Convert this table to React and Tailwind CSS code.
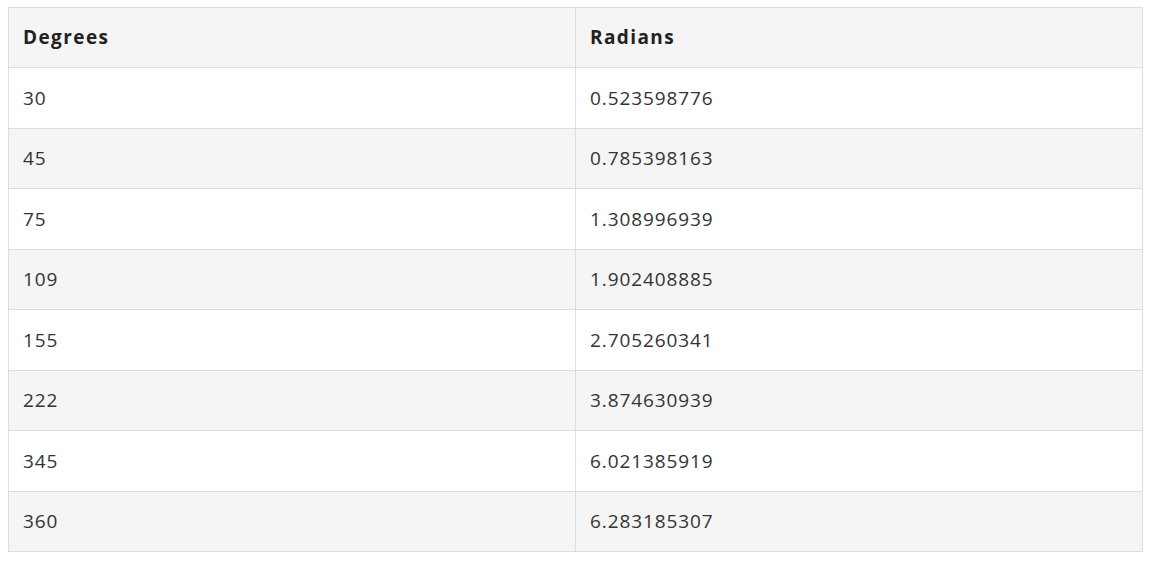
import React from 'react'

const rows = [
    ['30', '0.523598776'],
    ['45', '0.785398163'],
    ['75', '1.308996939'],
    ['109', '1.902408885'],
    ['155', '2.705260341'],
    ['222', '3.874630939'],
    ['345', '6.021385919'],
    ['360', '6.283185307'],
]

export default function App() {
    return (
        <div className="bg-white min-h-screen pl-2 pt-[7px] pr-2" style={{ fontFamily: '"Open Sans", sans-serif' }}>
            <table className="w-[1135px] border-collapse table-fixed text-[19px] text-[#333] tracking-[0.9px]">
                <thead>
                    <tr className="bg-[#f5f5f5]">
                        <th className="h-[60px] border border-[#ddd] px-[14px] text-left font-bold text-[#222] tracking-[1.4px]">Degrees</th>
                        <th className="h-[60px] border border-[#ddd] px-[14px] text-left font-bold text-[#222] tracking-[1.4px]">Radians</th>
                    </tr>
                </thead>
                <tbody>
                    {rows.map(([deg, rad], i) => (
                        <tr key={deg} className={i % 2 === 1 ? 'bg-[#f5f5f5]' : 'bg-white'}>
                            <td className="h-[60.5px] border border-[#ddd] px-[14px]">{deg}</td>
                            <td className="h-[60.5px] border border-[#ddd] px-[14px]">{rad}</td>
                        </tr>
                    ))}
                </tbody>
            </table>
        </div>
    )
}
